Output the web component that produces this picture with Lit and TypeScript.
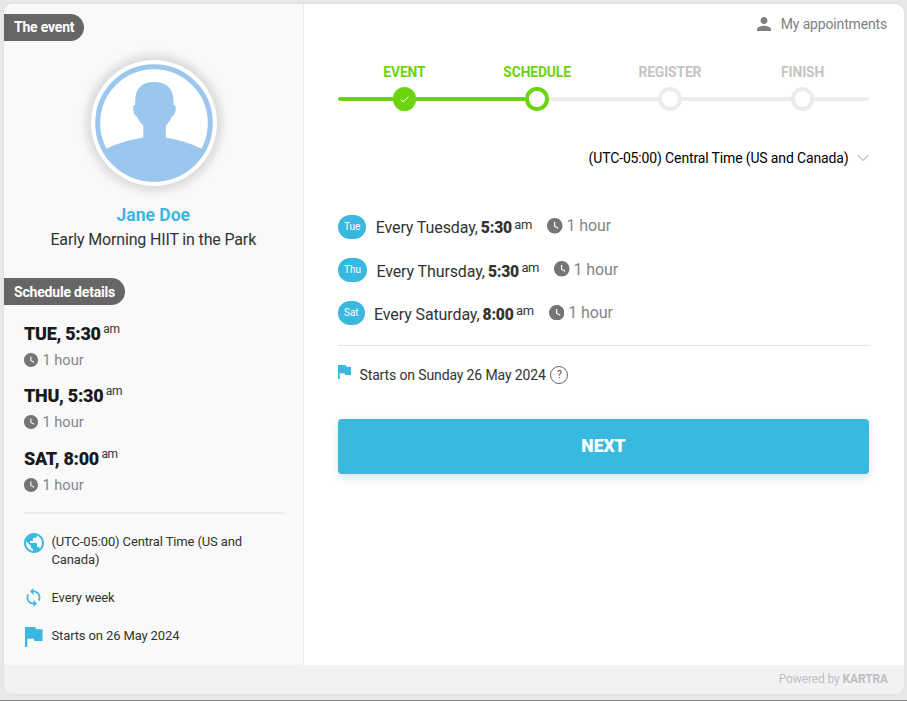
import { LitElement, html, css, svg } from "lit";
import { customElement, property } from "lit/decorators.js";

const PATHS: Record<string, { box: string; d: string }> = {
  clock: {
    box: "2 2 20 20",
    d: "M11.99 2C6.47 2 2 6.48 2 12s4.47 10 9.99 10C17.52 22 22 17.52 22 12S17.52 2 11.99 2zm4.1 13.95L11 13.1V7h1.600v5.200l4.300 2.400z",
  },
  globe: {
    box: "2 2 20 20",
    d: "M12 2C6.48 2 2 6.48 2 12s4.48 10 10 10 10-4.48 10-10S17.52 2 12 2zm-1 17.93c-3.95-.49-7-3.85-7-7.93 0-.62.08-1.21.21-1.79L9 15v1c0 1.1.9 2 2 2v1.93zm6.9-2.54c-.26-.81-1-1.39-1.9-1.39h-1v-3c0-.55-.45-1-1-1H8v-2h2c.55 0 1-.45 1-1V7h2c1.1 0 2-.9 2-2v-.41c2.93 1.19 5 4.06 5 7.41 0 2.08-.8 3.97-2.1 5.39z",
  },
  sync: {
    box: "1 1 22 22",
    d: "M12 4V1L8 5l4 4V6c3.31 0 6 2.69 6 6 0 1.01-.25 1.97-.7 2.8l1.46 1.46C19.54 15.03 20 13.57 20 12c0-4.42-3.58-8-8-8zm0 14c-3.31 0-6-2.69-6-6 0-1.01.25-1.97.7-2.8L5.24 7.74C4.46 8.97 4 10.43 4 12c0 4.42 3.58 8 8 8v3l4-4-4-4v3z",
  },
  flag: { box: "5 4 15 17", d: "M14.4 6L14 4H5v17h2v-7h5.6l.4 2h7V6z" },
  person: {
    box: "4 4 16 16",
    d: "M12 12c2.21 0 4-1.79 4-4s-1.79-4-4-4-4 1.79-4 4 1.79 4 4 4zm0 2c-2.67 0-8 1.34-8 4v2h16v-2c0-2.66-5.33-4-8-4z",
  },
};

@customElement("ui-icon")
class UiIcon extends LitElement {
  @property() name = "clock";
  static styles = css`
    :host { display: block; flex: none; }
    svg { display: block; width: 100%; height: 100%; fill: currentColor; }
  `;
  render() {
    const p = PATHS[this.name];
    return html`<svg viewBox=${p.box} preserveAspectRatio="none">${svg`<path d=${p.d}></path>`}</svg>`;
  }
}

const SLOTS = [
  { short: "TUE", badge: "Tue", day: "Tuesday", time: "5:30" },
  { short: "THU", badge: "Thu", day: "Thursday", time: "5:30" },
  { short: "SAT", badge: "Sat", day: "Saturday", time: "8:00" },
];

@customElement("event-sidebar")
class EventSidebar extends LitElement {
  static styles = css`
    :host { display: block; box-sizing: border-box; width: 299.5px; flex: none; background: #f9f9f9; border-right: 1px solid #ebebeb; padding-top: 9.5px; }
    .tag { display: block; width: max-content; box-sizing: border-box; height: 27.5px; line-height: 27.5px; padding: 0 10px; background: #666; color: #fff; font-size: 14px; letter-spacing: -0.2px; font-weight: 700; border-radius: 0 14px 14px 0; white-space: nowrap; }
    .tag.details { margin-top: 25.5px; letter-spacing: -0.19px; line-height: 28.5px; }
    .avatar { display: block; width: 126px; height: 126px; margin: 19px auto 0 86.5px; border-radius: 50%; background: #fff; box-shadow: 0 0 10px 5px rgba(0, 0, 0, 0.13); }
    .name { margin-top: 16px; height: 26px; line-height: 26px; text-align: center; font-size: 17.5px; letter-spacing: 0; font-weight: 700; color: #3ab9e0; }
    .title { height: 24px; line-height: 24px; text-align: center; font-size: 16px; letter-spacing: -0.15px; color: #333; }
    .slots { padding: 15.5px 20px 0; }
    .slot { height: 62.7px; }
    .time { display: flex; height: 26px; line-height: 26px; font-size: 18px; letter-spacing: -0.3px; font-weight: 900; color: #1a1a1a; white-space: nowrap; }
    .am { font-size: 12px; letter-spacing: -0.4px; font-weight: 400; color: #333; line-height: 16px; margin-left: 2.5px; }
    .dur { display: flex; align-items: center; gap: 4.5px; height: 26px; color: #858585; font-size: 14.6px; }
    .dur ui-icon { width: 14px; height: 14px; color: #757575; }
    .rule { height: 2px; margin: 3.5px 19px 0 20px; background: #ebebeb; }
    .facts { display: flex; flex-direction: column; padding: 19px 20px 0; font-size: 13px; line-height: 18px; letter-spacing: -0.13px; color: #333; }
    .fact { display: flex; }
    .fact ui-icon { color: #3ab9e0; }
    .globe { width: 20px; height: 20px; margin: -0.5px 7.5px 0 0; }
    .sync { width: 19px; height: 19px; margin: -0.5px 8.5px 0 0; }
    .flag { width: 17.5px; height: 20px; margin: 0 9px 0 1px; }
    .fact + .fact { margin-top: 19.5px; }
  `;
  render() {
    return html`
      <span class="tag">The event</span>
      <svg class="avatar" viewBox="0 0 126 126">
        <defs><clipPath id="disc"><circle cx="63" cy="63" r="58.5"></circle></clipPath></defs>
        <circle cx="63" cy="63" r="56.3" fill="#fff" stroke="#9bc6ee" stroke-width="5"></circle>
        <g fill="#9bc6ee" clip-path="url(#disc)">
          <path d="M63 22c12 0 19.300 6 19.500 18.500v4.500c2.700 0 2.500 3.500 1.800 6.500-.8 3-2 4.700-3.300 5-1.800 4-3.800 7-6.200 9v12c13 2.200 25 5.700 36 11.500v38H15V89c11-5.800 24-9.300 37.300-11.500V65.500c-2.400-2-4.600-5-6.400-9-1.500-.3-2.700-2-3.300-5-.7-3-1-6.500 1.600-6.500v-4.500C44.500 28 51 22 63 22z"></path>
        </g>
      </svg>
      <div class="name">Jane Doe</div>
      <div class="title">Early Morning HIIT in the Park</div>
      <span class="tag details">Schedule details</span>
      <div class="slots">
        ${SLOTS.map(
          (s) => html`<div class="slot">
            <div class="time">${s.short}, ${s.time}<span class="am">am</span></div>
            <div class="dur"><ui-icon name="clock"></ui-icon>1 hour</div>
          </div>`
        )}
      </div>
      <div class="rule"></div>
      <div class="facts">
        <div class="fact"><ui-icon class="globe" name="globe"></ui-icon><span>(UTC-05:00) Central Time (US and Canada)</span></div>
        <div class="fact"><ui-icon class="sync" name="sync"></ui-icon><span>Every week</span></div>
        <div class="fact"><ui-icon class="flag" name="flag"></ui-icon><span>Starts on 26 May 2024</span></div>
      </div>
    `;
  }
}

@customElement("step-tracker")
class StepTracker extends LitElement {
  static styles = css`
    :host { display: grid; grid-template-columns: repeat(4, 1fr); }
    .step { display: flex; flex-direction: column; align-items: center; color: #c4c4c4; }
    .label { height: 20px; line-height: 20px; font-size: 13.8px; letter-spacing: -0.1px; font-weight: 700; }
    .track { display: flex; align-items: center; width: 100%; height: 24px; margin-top: 5px; }
    .bar { flex: 1; height: 4px; background: #ececec; }
    .dot { box-sizing: border-box; width: 23.5px; height: 23.5px; border: 4px solid #ececec; border-radius: 50%; background: #fff; display: flex; align-items: center; justify-content: center; }
    .step:first-child .bar:first-child { border-radius: 2px 0 0 2px; }
    .step:last-child .bar:last-child { border-radius: 0 2px 2px 0; }
    .done, .current { color: #6bd40f; }
    .done .bar, .current .bar:first-child { background: #6bd40f; }
    .current .dot { border-color: #6bd40f; }
    .done .dot { border-color: #6bd40f; background: #6bd40f; }
    .check { display: block; width: 9px; height: 7px; fill: none; stroke: #fff; stroke-width: 1; }
  `;
  render() {
    const steps = [
      ["EVENT", "done"],
      ["SCHEDULE", "current"],
      ["REGISTER", ""],
      ["FINISH", ""],
    ];
    return steps.map(
      ([label, state]) => html`<div class="step ${state}">
        <span class="label">${label}</span>
        <div class="track">
          <span class="bar"></span>
          <span class="dot">${state === "done" ? html`<svg class="check" viewBox="0 0 9 7"><path d="M.7 3.500L3.300 6 8.300.700"></path></svg>` : ""}</span>
          <span class="bar"></span>
        </div>
      </div>`
    );
  }
}

@customElement("app-root")
class AppRoot extends LitElement {
  static styles = css`
    :host { display: block; box-sizing: border-box; width: 100%; height: 701px; padding: 4px 3px 0 4px; background: #e7e8ea; border-bottom: 1px solid #858585; font-family: Roboto, "Liberation Sans", sans-serif; overflow: hidden; }
    .card { display: flex; flex-direction: column; height: 690px; border-radius: 9px; overflow: hidden; background: #fff; box-shadow: 0 0 3px rgba(0, 0, 0, 0.06); }
    .body { display: flex; height: 661px; }
    .main { flex: 1; padding: 0 35px 0 34.5px; }
    .account { display: flex; align-items: center; justify-content: flex-end; gap: 10px; height: 24px; margin: 8px -18px 0 0; color: #808080; font-size: 14px; letter-spacing: -0.16px; }
    .account ui-icon { width: 14px; height: 14px; }
    step-tracker { margin-top: 26px; }
    .zone { display: flex; align-items: center; justify-content: flex-end; gap: 8.5px; height: 24px; margin-top: 34.5px; font-size: 14px; letter-spacing: -0.14px; color: #000; }
    .chevron { width: 12px; height: 8px; fill: none; stroke: #c4c4c4; stroke-width: 1.2; }
    .sessions { margin-top: 35.5px; }
    .session { display: flex; align-items: center; height: 43.3px; font-size: 16px; letter-spacing: -0.04px; color: #333; white-space: nowrap; }
    .badge { height: 24px; line-height: 24px; padding: 0 6px; margin-right: 9.5px; border-radius: 12px; background: #3ab9e0; color: #fff; font-size: 10px; }
    .day, .time { position: relative; top: 1.3px; letter-spacing: -0.11px; }
    .time { font-weight: 900; margin-left: 3px; letter-spacing: -0.25px; font-size: 15.7px; }
    .am { font-size: 13px; letter-spacing: -0.4px; margin: -5px 0 0 2.5px; }
    .dur { display: flex; align-items: center; gap: 4px; margin: -1.5px 0 0 15px; color: #858585; letter-spacing: -0.1px; }
    .dur ui-icon { width: 15.5px; height: 15.5px; color: #757575; }
    .start { display: flex; align-items: center; height: 26px; border-top: 1px solid #e5e5e5; padding-top: 16px; margin-top: 10px; font-size: 14px; letter-spacing: -0.13px; color: #333; }
    .start ui-icon { width: 13px; height: 14px; margin: -5px 8.5px 0 0; color: #3ab9e0; }
    .help { box-sizing: border-box; width: 18px; height: 18px; margin-left: 4.5px; border: 1px solid #666; border-radius: 50%; text-align: center; line-height: 16px; font-size: 10px; color: #444; }
    .next { display: block; width: 100%; height: 55px; margin-top: 31px; padding: 0; border: 0; border-radius: 4px; background: #3ab9e0; color: #fff; font: 900 17.5px/55px Roboto, sans-serif; box-shadow: 0 4px 10px rgba(0, 0, 0, 0.12); }
    .footer { flex: 1; background: #f1f2f4; line-height: 29px; padding-right: 16px; text-align: right; font-size: 12px; letter-spacing: -0.12px; color: #c0c0c0; }
  `;
  render() {
    return html`<div class="card">
      <div class="body">
        <event-sidebar></event-sidebar>
        <main class="main">
          <div class="account"><ui-icon name="person"></ui-icon><span>My appointments</span></div>
          <step-tracker></step-tracker>
          <div class="zone"><span>(UTC-05:00) Central Time (US and Canada)</span>
            <svg class="chevron" viewBox="0 0 12 8"><path d="M.500 1L6 6.500 11.500 1"></path></svg></div>
          <div class="sessions">
            ${SLOTS.map(
              (s) => html`<div class="session">
                <span class="badge">${s.badge}</span><span class="day">Every ${s.day},</span><span class="time">${s.time}</span><span class="am">am</span>
                <span class="dur"><ui-icon name="clock"></ui-icon>1 hour</span>
              </div>`
            )}
          </div>
          <div class="start"><ui-icon name="flag"></ui-icon><span>Starts on Sunday 26 May 2024</span><span class="help">?</span></div>
          <button class="next">NEXT</button>
        </main>
      </div>
      <div class="footer">Powered by <b>KARTRA</b></div>
    </div>`;
  }
}
